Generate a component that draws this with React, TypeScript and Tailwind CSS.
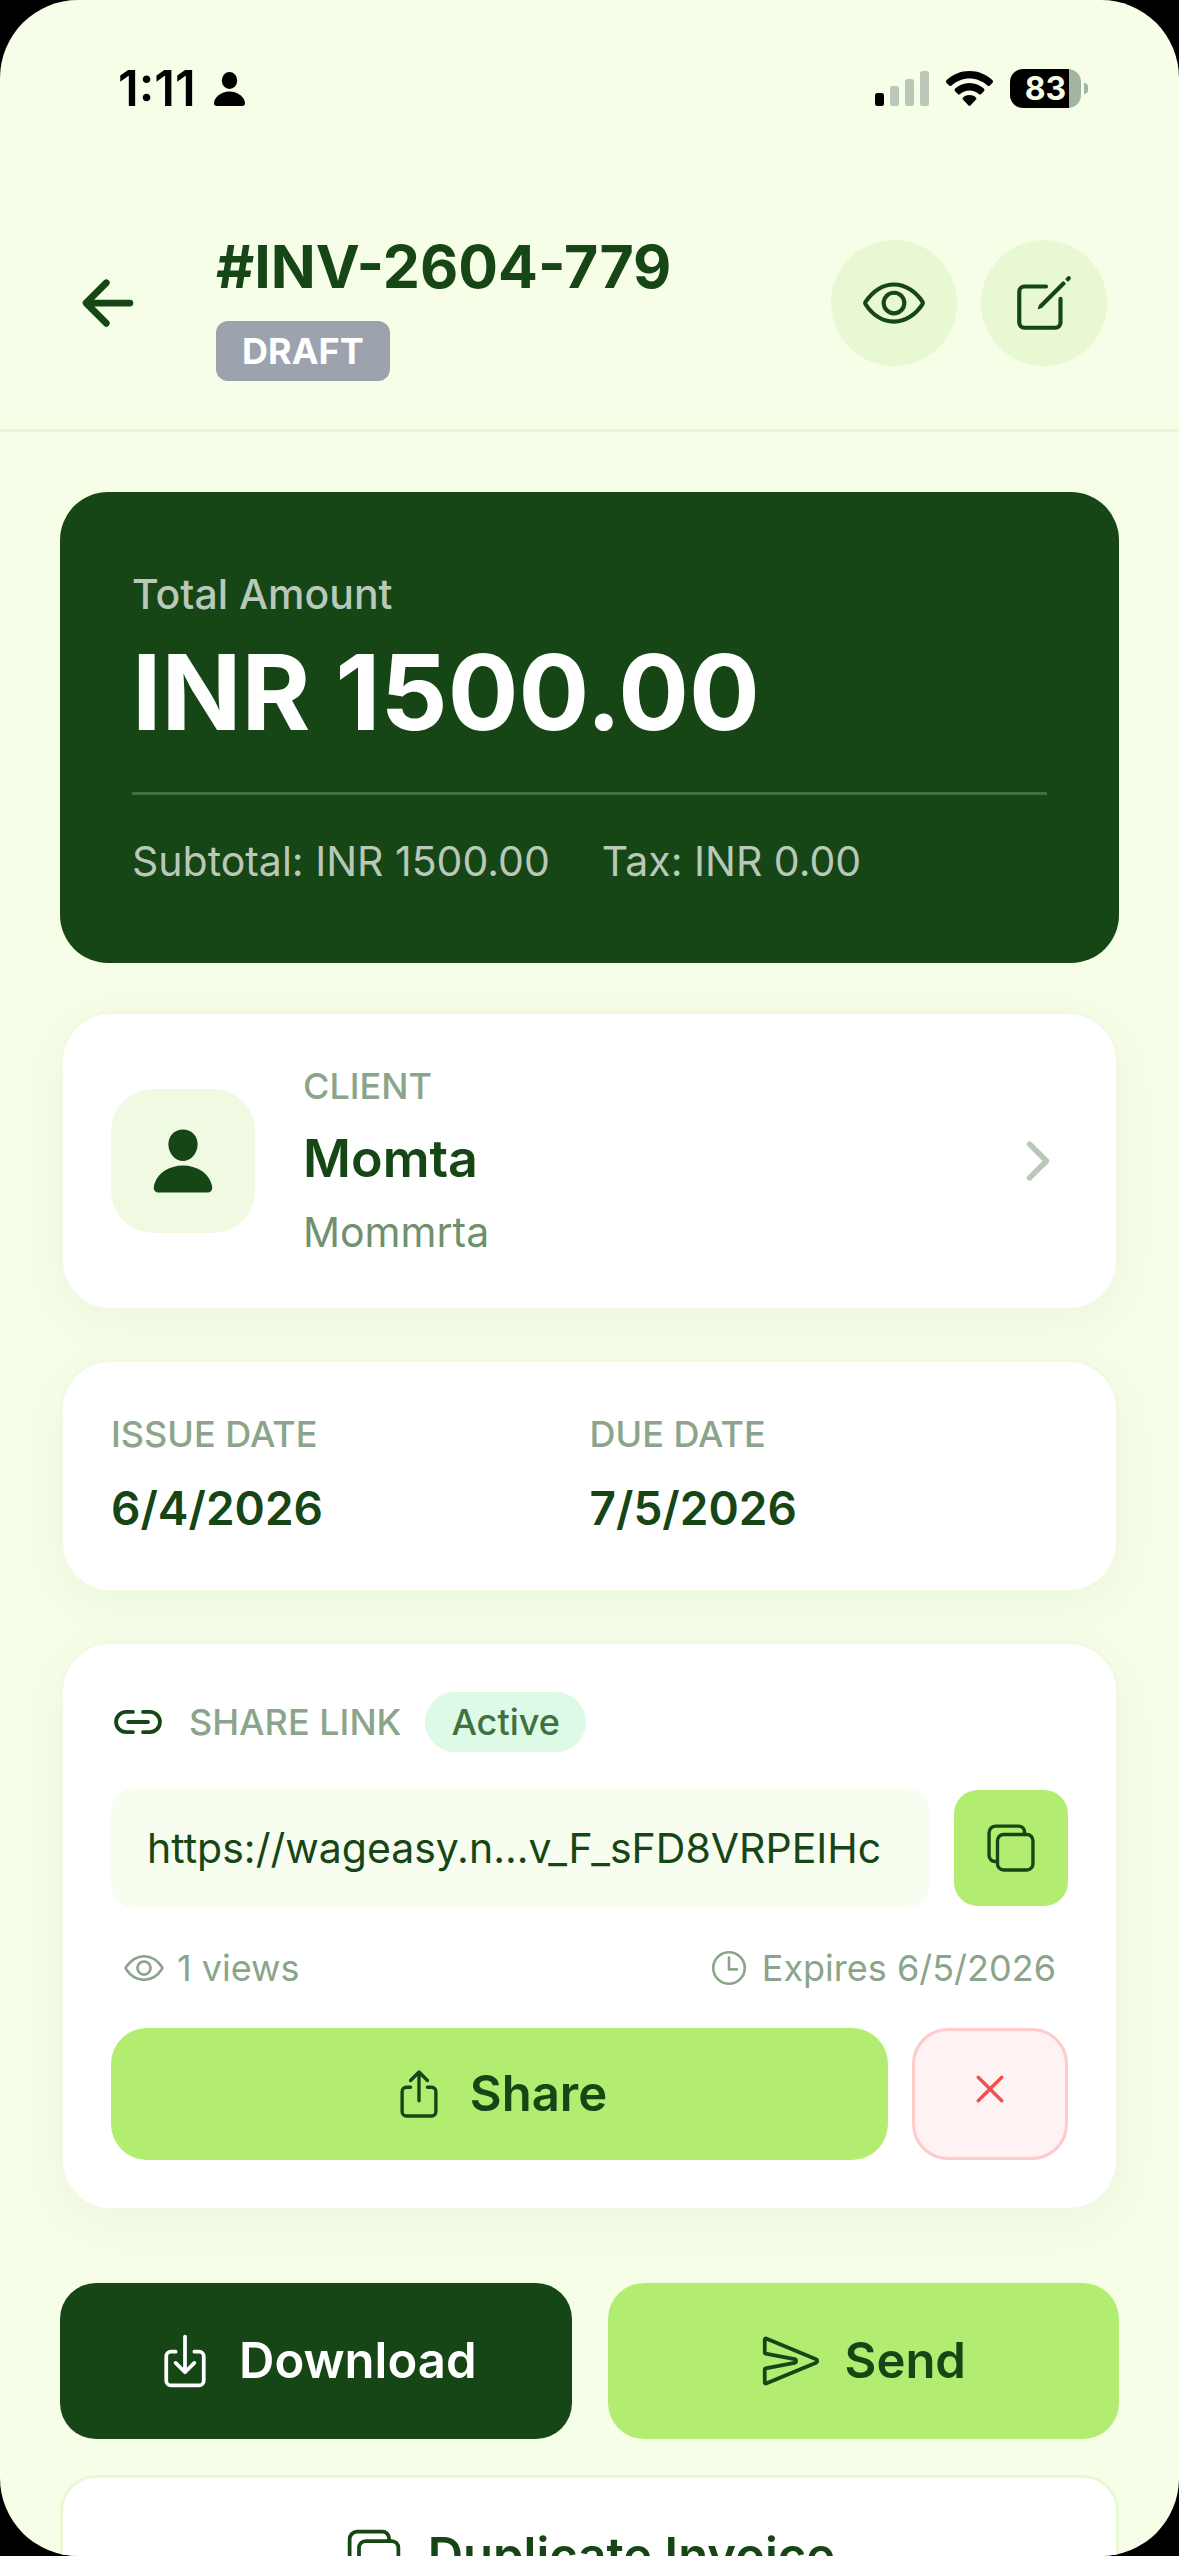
import React from "react";
import {
  IoArrowBack,
  IoChevronForward,
  IoCloseOutline,
  IoCopyOutline,
  IoCreateOutline,
  IoDownloadOutline,
  IoEyeOutline,
  IoLinkOutline,
  IoPerson,
  IoSendOutline,
  IoShareOutline,
  IoTimeOutline,
} from "react-icons/io5";

const CARD =
  "rounded-[51px] border-[3px] border-[#f0fae3] bg-white shadow-[0_12px_48px_rgba(22,71,22,0.05)]";

function StatusBar() {
  return (
    <div className="flex h-[177px] items-center justify-between pr-[91px] pl-[118px] text-black">
      <div className="flex items-center gap-[18px]">
        <span className="text-[49px] leading-[60px] font-semibold">1:11</span>
        <svg viewBox="0 0 31 34" className="h-[34px] w-[31px]" fill="currentColor" aria-hidden="true">
          <ellipse cx="15.500" cy="8.500" rx="7.700" ry="8.500" />
          <path d="M15.500 19.500C24 19.500 31 25.500 31 31.200C31 33 30 34 28.200 34H2.800C1 34 0 33 0 31.200C0 25.500 7 19.500 15.500 19.500Z" />
        </svg>
      </div>
      <div className="flex items-center gap-[17px]">
        <svg viewBox="0 0 54 35" className="h-[35px] w-[54px]" aria-hidden="true">
          <rect x="0" y="22" width="9" height="13" rx="2.500" fill="#000" />
          <rect x="15" y="15" width="9" height="20" rx="2.500" fill="#bac8ba" />
          <rect x="30" y="8" width="9" height="27" rx="2.500" fill="#bac8ba" />
          <rect x="45" y="0" width="9" height="35" rx="2.500" fill="#bac8ba" />
        </svg>
        <svg viewBox="0 0 47 35" className="h-[35px] w-[47px]" fill="currentColor" aria-hidden="true">
          <path d="M23.500 0C32.300 0 40.300 3.400 46.300 9C47.200 9.900 47.200 11 46.400 11.900L43.900 14.400C43.200 15.100 42.200 15.100 41.400 14.400C36.700 10.100 30.400 7.400 23.500 7.400S10.300 10.100 5.600 14.400C4.800 15.100 3.800 15.100 3.100 14.400L0.600 11.900C-0.200 11 -0.200 9.900 0.700 9C6.700 3.400 14.700 0 23.500 0Z" />
          <path d="M23.500 12C29 12 34 14.100 37.800 17.600C38.700 18.400 38.700 19.500 37.900 20.300L35.300 22.900C34.600 23.600 33.600 23.600 32.800 22.900C30.300 20.700 27.100 19.400 23.500 19.400S16.700 20.700 14.200 22.900C13.400 23.600 12.400 23.600 11.700 22.900L9.100 20.300C8.300 19.500 8.300 18.400 9.200 17.600C13 14.100 18 12 23.500 12Z" />
          <path d="M23.500 24C25.900 24 28 24.800 29.700 26.200C30.600 27 30.600 28 29.800 28.800L24.700 34.200C24 34.900 23 34.900 22.300 34.200L17.200 28.800C16.400 28 16.400 27 17.300 26.200C19 24.800 21.100 24 23.500 24Z" />
        </svg>
        <div className="flex items-center gap-[3px]">
          <div className="flex h-[39px] w-[71px] items-center justify-center overflow-hidden rounded-[13px] bg-linear-to-r from-black from-[59px] to-[#a3b4a3] to-[59px] text-[32px] leading-[39px] font-bold text-[#f7fee8]">
            83
          </div>
          <div className="h-[11px] w-1 rounded-r-full bg-[#a3b4a3]" />
        </div>
      </div>
    </div>
  );
}

function Header() {
  return (
    <header className="flex items-center gap-6 border-b-[3px] border-[#e8f8d2] px-[72px] py-12">
      <button type="button" aria-label="Back" className="mr-12">
        <IoArrowBack className="size-[72px]" />
      </button>
      <div className="flex flex-1 flex-col items-start gap-3">
        <h1 className="text-[59px] leading-[84px] font-bold">#INV-2604-779</h1>
        <span className="rounded-xl bg-[#9ca3af] px-[26px] text-[36px] leading-[60px] font-bold text-white">
          DRAFT
        </span>
      </div>
      <button
        type="button"
        aria-label="Preview"
        className="flex size-[126px] items-center justify-center rounded-full bg-[#e8f8d2]"
      >
        <IoEyeOutline className="size-[66px]" />
      </button>
      <button
        type="button"
        aria-label="Edit"
        className="flex size-[126px] items-center justify-center rounded-full bg-[#e8f8d2]"
      >
        <IoCreateOutline className="size-[66px]" />
      </button>
    </header>
  );
}

function TotalCard() {
  return (
    <section className="rounded-[48px] bg-[#164616] p-[72px] text-[#b9c8b9]">
      <p className="text-[41px] leading-[60px] font-medium">Total Amount</p>
      <p className="text-[105px] leading-[136px] font-bold text-white">INR 1500.00</p>
      <div className="mt-8 flex gap-[52px] border-t-[3px] border-[#40713f] pt-9 text-[41px] leading-[60px]">
        <span>Subtotal: INR 1500.00</span>
        <span>Tax: INR 0.00</span>
      </div>
    </section>
  );
}

function Label({ children }: { children: React.ReactNode }) {
  return <span className="text-[36px] leading-[48px] font-medium text-[#8aa58a]">{children}</span>;
}

function ClientCard() {
  return (
    <button type="button" className={`${CARD} flex items-center gap-12 p-12 text-left`}>
      <span className="flex size-36 items-center justify-center rounded-[42px] bg-[#f0fae3]">
        <IoPerson className="size-[72px]" />
      </span>
      <span className="flex flex-1 flex-col gap-4 pb-1">
        <Label>CLIENT</Label>
        <span className="text-[52px] leading-[66px] font-semibold">Momta</span>
        <span className="text-[41px] leading-[48px] text-[#6e916e]">Mommrta</span>
      </span>
      <IoChevronForward className="size-[60px] text-[#b9c8b9]" />
    </button>
  );
}

function DatesCard() {
  const dates = [
    { label: "ISSUE DATE", value: "6/4/2026" },
    { label: "DUE DATE", value: "7/5/2026" },
  ];
  return (
    <section className={`${CARD} grid grid-cols-2 p-12`}>
      {dates.map((d) => (
        <div key={d.label} className="flex flex-col gap-4">
          <Label>{d.label}</Label>
          <span className="text-[46px] leading-[68px] font-semibold">{d.value}</span>
        </div>
      ))}
    </section>
  );
}

function ShareCard() {
  return (
    <section className={`${CARD} flex flex-col gap-9 p-12`}>
      <div className="flex items-center gap-6">
        <IoLinkOutline className="size-[54px]" />
        <Label>SHARE LINK</Label>
        <span className="rounded-full bg-[#dcfae6] px-[26px] text-[36px] leading-[60px] font-medium text-[#40713f]">
          Active
        </span>
      </div>
      <div className="flex items-center gap-6">
        <p className="min-w-0 flex-1 truncate rounded-3xl bg-[#f7fdef] px-9 text-[41px] leading-[120px]">
          https://wageasy.n...v_F_sFD8VRPEIHc
        </p>
        <button
          type="button"
          aria-label="Copy link"
          className="flex h-[116px] w-[114px] items-center justify-center rounded-3xl bg-[#b2ed72]"
        >
          <IoCopyOutline className="size-[54px]" />
        </button>
      </div>
      <div className="flex items-center justify-between px-3 text-[36px] leading-[48px] text-[#8aa58a]">
        <span className="flex items-center gap-3">
          <IoEyeOutline className="size-[42px]" />1 views
        </span>
        <span className="flex items-center gap-3">
          <IoTimeOutline className="size-[42px]" />
          Expires 6/5/2026
        </span>
      </div>
      <div className="flex gap-6">
        <button
          type="button"
          className="flex h-[132px] flex-1 items-center justify-center gap-6 rounded-[36px] bg-[#b2ed72] text-[49px] font-semibold"
        >
          <IoShareOutline className="size-[54px]" />
          Share
        </button>
        <button
          type="button"
          aria-label="Revoke link"
          className="flex h-[132px] w-[156px] items-center justify-center rounded-[36px] border-[3px] border-[#fecaca] bg-[#fef2f2] pb-2.5 text-[#f25050]"
        >
          <IoCloseOutline className="size-[54px]" />
        </button>
      </div>
    </section>
  );
}

function Actions() {
  return (
    <section className="mt-6 grid grid-cols-2 gap-9 text-[49px] font-semibold">
      <button
        type="button"
        className="flex h-[156px] items-center justify-center gap-6 rounded-[36px] bg-[#164616] text-white"
      >
        <IoDownloadOutline className="size-[60px]" />
        Download
      </button>
      <button
        type="button"
        className="flex h-[156px] items-center justify-center gap-6 rounded-[36px] bg-[#b2ed72]"
      >
        <IoSendOutline className="size-[60px]" />
        Send
      </button>
      <button
        type="button"
        className="col-span-2 flex h-[162px] items-center justify-center gap-6 rounded-[36px] border-[3px] border-[#e8f8d2] bg-white"
      >
        <IoCopyOutline className="size-[60px]" />
        Duplicate Invoice
      </button>
    </section>
  );
}

export default function App() {
  return (
    <div className="h-screen bg-black">
      <div className="h-full overflow-hidden rounded-[78px] bg-[#f7fee8] font-['Inter',sans-serif] text-[#164616]">
        <StatusBar />
        <Header />
        <main className="flex flex-col gap-12 p-[60px]">
          <TotalCard />
          <ClientCard />
          <DatesCard />
          <ShareCard />
          <Actions />
        </main>
      </div>
    </div>
  );
}
